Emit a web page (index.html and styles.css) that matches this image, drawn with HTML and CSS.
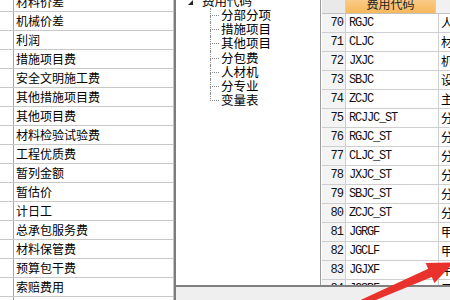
FILE: index.html
```html
<!DOCTYPE html>
<html lang="zh-CN">

<head>
    <meta charset="UTF-8">
    <meta name="viewport" content="width=device-width, initial-scale=1.0">
    <title>费用代码</title>
    <link rel="stylesheet" href="styles.css">
</head>

<body>
<div class="workspace">
    <!-- fee list, scrolled a little -->
    <aside class="fee-list">
        <div class="fee-rows">
            <div class="fee-row"><span class="fee-idx"></span><span class="fee-name">材料价差</span></div>
            <div class="fee-row"><span class="fee-idx"></span><span class="fee-name">机械价差</span></div>
            <div class="fee-row"><span class="fee-idx"></span><span class="fee-name">利润</span></div>
            <div class="fee-row"><span class="fee-idx"></span><span class="fee-name">措施项目费</span></div>
            <div class="fee-row"><span class="fee-idx"></span><span class="fee-name">安全文明施工费</span></div>
            <div class="fee-row"><span class="fee-idx"></span><span class="fee-name">其他措施项目费</span></div>
            <div class="fee-row"><span class="fee-idx"></span><span class="fee-name">其他项目费</span></div>
            <div class="fee-row"><span class="fee-idx"></span><span class="fee-name">材料检验试验费</span></div>
            <div class="fee-row"><span class="fee-idx"></span><span class="fee-name">工程优质费</span></div>
            <div class="fee-row"><span class="fee-idx"></span><span class="fee-name">暂列金额</span></div>
            <div class="fee-row"><span class="fee-idx"></span><span class="fee-name">暂估价</span></div>
            <div class="fee-row"><span class="fee-idx"></span><span class="fee-name">计日工</span></div>
            <div class="fee-row"><span class="fee-idx"></span><span class="fee-name">总承包服务费</span></div>
            <div class="fee-row"><span class="fee-idx"></span><span class="fee-name">材料保管费</span></div>
            <div class="fee-row"><span class="fee-idx"></span><span class="fee-name">预算包干费</span></div>
            <div class="fee-row"><span class="fee-idx"></span><span class="fee-name">索赔费用</span></div>
            <div class="fee-row"><span class="fee-idx"></span><span class="fee-name"></span></div>
        </div>
    </aside>
    <div class="splitter"></div>

    <section class="right-area">
        <div class="right-main">
            <nav class="code-tree">
                <div class="tree-root"><span class="tree-toggle"></span><span>费用代码</span></div>
                <ul class="tree-children">
                    <li>分部分项</li>
                    <li>措施项目</li>
                    <li>其他项目</li>
                    <li>分包费</li>
                    <li>人材机</li>
                    <li>分专业</li>
                    <li>变量表</li>
                </ul>
            </nav>

            <div class="code-table">
                <div class="grid-rows">
                    <div class="grid-row grid-head">
                        <span class="cell-no"></span>
                        <span class="cell-code">费用代码</span>
                        <span class="cell-name"></span>
                    </div>
                    <div class="grid-row"><span class="cell-no">70</span><span class="cell-code">RGJC</span><span class="cell-name">人工费</span></div>
                    <div class="grid-row"><span class="cell-no">71</span><span class="cell-code">CLJC</span><span class="cell-name">材料费</span></div>
                    <div class="grid-row"><span class="cell-no">72</span><span class="cell-code">JXJC</span><span class="cell-name">机械费</span></div>
                    <div class="grid-row"><span class="cell-no">73</span><span class="cell-code">SBJC</span><span class="cell-name">设备费</span></div>
                    <div class="grid-row"><span class="cell-no">74</span><span class="cell-code">ZCJC</span><span class="cell-name">主材费</span></div>
                    <div class="grid-row"><span class="cell-no">75</span><span class="cell-code">RCJJC_ST</span><span class="cell-name">分部分项</span></div>
                    <div class="grid-row"><span class="cell-no">76</span><span class="cell-code">RGJC_ST</span><span class="cell-name">分部分项</span></div>
                    <div class="grid-row"><span class="cell-no">77</span><span class="cell-code">CLJC_ST</span><span class="cell-name">分部分项</span></div>
                    <div class="grid-row"><span class="cell-no">78</span><span class="cell-code">JXJC_ST</span><span class="cell-name">分部分项</span></div>
                    <div class="grid-row"><span class="cell-no">79</span><span class="cell-code">SBJC_ST</span><span class="cell-name">分部分项</span></div>
                    <div class="grid-row"><span class="cell-no">80</span><span class="cell-code">ZCJC_ST</span><span class="cell-name">分部分项</span></div>
                    <div class="grid-row"><span class="cell-no">81</span><span class="cell-code">JGRGF</span><span class="cell-name">甲供人工费</span></div>
                    <div class="grid-row"><span class="cell-no">82</span><span class="cell-code">JGCLF</span><span class="cell-name">甲供材料费</span></div>
                    <div class="grid-row"><span class="cell-no">83</span><span class="cell-code">JGJXF</span><span class="cell-name">甲供机械费</span></div>
                    <div class="grid-row"><span class="cell-no">84</span><span class="cell-code">JGSBF</span><span class="cell-name">三</span></div>
                </div>
            </div>
        </div>
        <div class="status-band"></div>
    </section>
</div>

<!-- red annotation arrow -->
<svg class="mark-arrow" width="450" height="300" viewBox="0 0 450 300">
    <polygon points="344,307.7 428.2,268.7 425.6,262.9 453.8,262.4 434.4,282.9 431.8,276.9 346,312.3" fill="#e8322b"/>
</svg>
</body>

</html>
```

FILE: styles.css
```css
body {
    font-family: "Noto Sans CJK SC", sans-serif;
    font-size: 12px;
    color: #000;
    margin: 0;
    padding: 0;
    background-color: #fff;
    overflow: hidden;
}

.workspace {
    display: flex;
    width: 450px;
    height: 300px;
    overflow: hidden;
}

/* left list */
.fee-list {
    width: 173px;
    flex: none;
    border-right: 1px solid #c4c4c4;
    overflow: hidden;
}

.fee-rows {
    margin-top: -7px;
}

.fee-row {
    display: flex;
    height: 18px;
    line-height: 18px;
    border-bottom: 1px solid #c8c8c8;
}

.fee-idx {
    width: 13px;
    flex: none;
    border-right: 1px solid #a6a6a6;
}

.fee-name {
    padding-left: 2px;
    white-space: nowrap;
}

.splitter {
    width: 2px;
    flex: none;
    background-color: #7d7d7d;
}

.right-area {
    flex: 1;
    min-width: 0;
    display: flex;
    flex-direction: column;
}

.right-main {
    flex: 1;
    display: flex;
    overflow: hidden;
}

.status-band {
    height: 13px;
    flex: none;
    border-top: 2px solid #808080;
    background-color: #efefef;
}

/* tree */
.code-tree {
    width: 144px;
    flex: none;
    overflow: hidden;
    font-size: 12.5px;
}

.tree-root {
    display: flex;
    align-items: flex-start;
    height: 14px;
    line-height: 14px;
    margin-top: -6px;
    padding-left: 12px;
}

.tree-toggle {
    width: 0;
    height: 0;
    margin-top: 6px;
    margin-right: 9px;
    border-left: 5px solid transparent;
    border-bottom: 5px solid #262626;
}

.tree-children {
    list-style: none;
    margin: 0 0 0 34px;
    padding: 0;
}

.tree-children li {
    position: relative;
    height: 14.2px;
    line-height: 14px;
    padding-left: 11px;
    white-space: nowrap;
}

.tree-children li::before {
    content: "";
    position: absolute;
    left: 0;
    top: 0;
    width: 8px;
    height: 7px;
    border-left: 1px dotted #8a8a8a;
    border-bottom: 1px dotted #8a8a8a;
}

.tree-children li:not(:last-child)::after {
    content: "";
    position: absolute;
    left: 0;
    top: 8px;
    bottom: 0;
    border-left: 1px dotted #8a8a8a;
}

/* code table */
.code-table {
    flex: 1;
    min-width: 0;
    border-left: 1px solid #9c9c9c;
    padding-left: 1px;
    overflow: hidden;
}

.grid-rows {
    margin-top: -6px;
}

.grid-row {
    display: flex;
    height: 18px;
    line-height: 18px;
    border-bottom: 1px solid #cfcfcf;
    white-space: nowrap;
}

.grid-head {
    height: 19px;
    line-height: 19px;
    border-bottom-color: #c2c2c2;
}

.cell-no {
    width: 21px;
    flex: none;
    padding-right: 2px;
    text-align: right;
    border-right: 1px solid #cfcfcf;
    background-color: #f4f4f4;
    font-family: "Liberation Mono", monospace;
    font-size: 12px;
    letter-spacing: -1px;
    color: #111;
}

.cell-code {
    width: 89px;
    flex: none;
    padding-left: 3px;
    border-right: 1px solid #cfcfcf;
    font-family: "Liberation Mono", monospace;
    font-size: 12px;
    letter-spacing: -1.2px;
    color: #111;
}

.cell-name {
    flex: 1;
    padding-left: 2px;
    overflow: hidden;
}

.grid-head .cell-no {
    background-color: #e9e9e9;
}

.grid-head .cell-code {
    padding-left: 0;
    text-align: center;
    font-family: "Noto Sans CJK SC", sans-serif;
    font-size: 12px;
    letter-spacing: 0;
    color: #222;
    background: linear-gradient(#fbd49a, #f6b85c);
}

.grid-head .cell-name {
    background-color: #f1f1f1;
}

.mark-arrow {
    position: fixed;
    left: 0;
    top: 0;
    pointer-events: none;
}
```
